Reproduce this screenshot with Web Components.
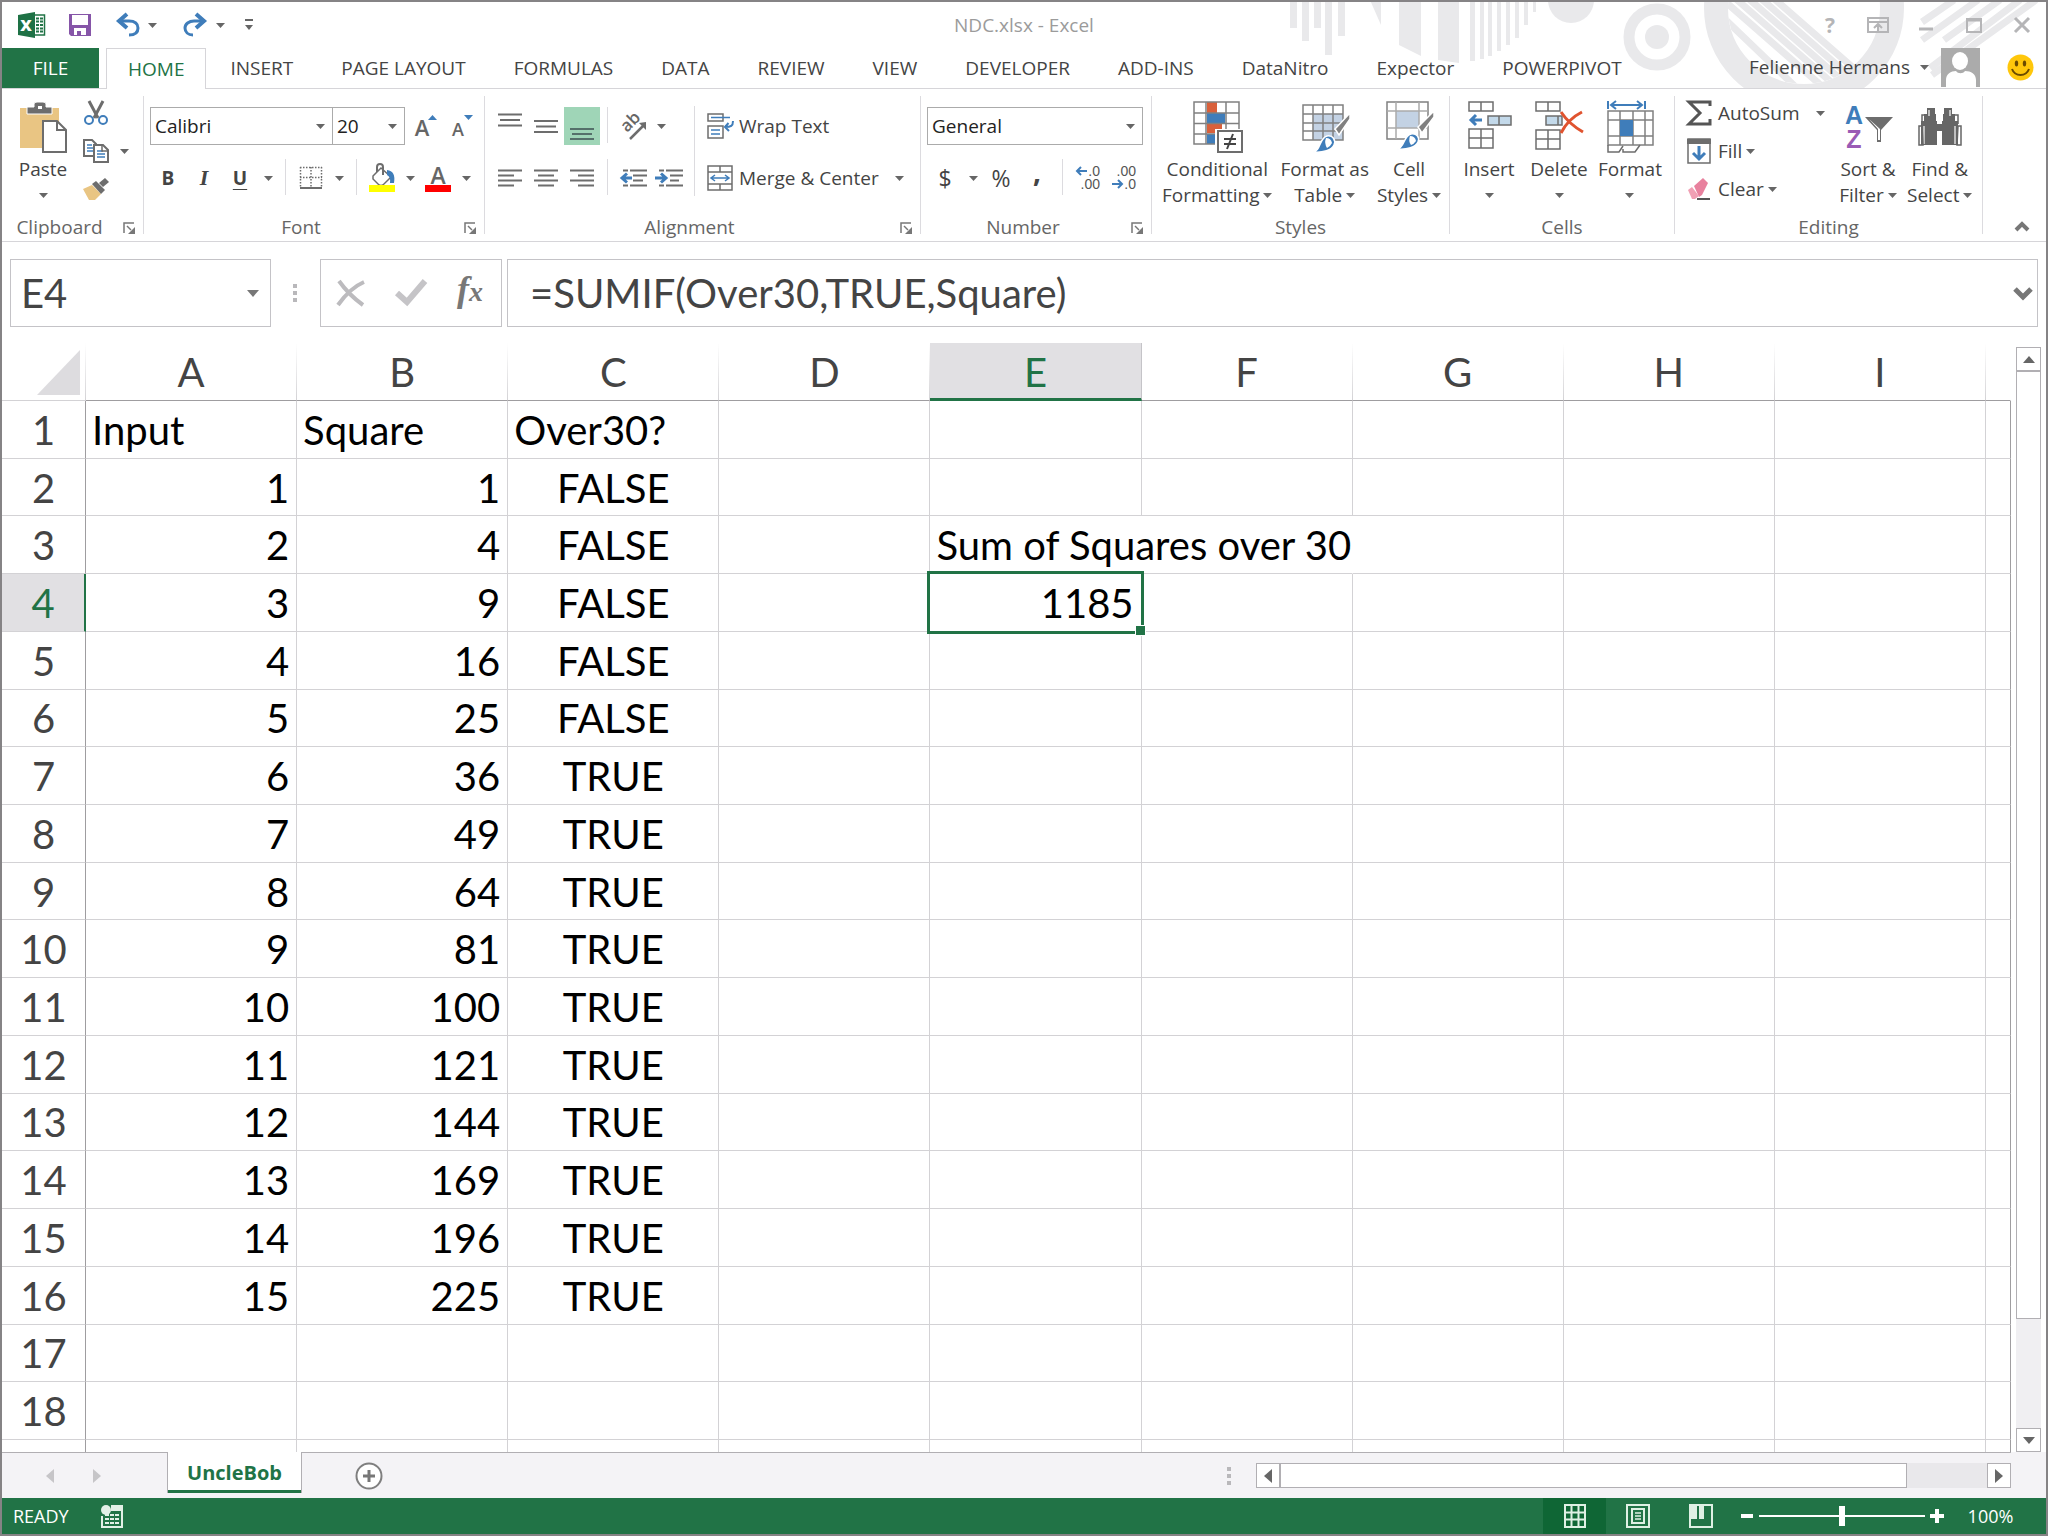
<!DOCTYPE html>
<html lang="en">
<head>
<meta charset="utf-8">
<meta name="viewport" content="width=device-width, initial-scale=1">
<title>NDC.xlsx - Excel</title>
<style>
    :root{
        --green: #217346;
        --text: #444;
        --gray: #737373;
        --line: #d6d5d9;
        --line-dark: #aaa8ac;
        --blue: #3f7dba;
        --font-ui: "Open Sans", "Noto Sans", sans-serif;
        --font-cell: Lato, "Liberation Sans", sans-serif;
        --size-ui: 19px;
        --size-cell: 40px;
    }
    body{
        margin: 0;
    }
</style>
</head>
<body>
<excel-window></excel-window>

<script>
// name: [width, height, markup]
const icons = {
    caret: [9, 5, `<path d="M0 0h9L4.500 5z" fill="#666"/>`],
    excel: [28, 26, `<path d="M14 3h12.500v20H14z" fill="#fff" stroke="#217346" stroke-width="1.500"/><path d="M18 6.500h7M18 9.500h7M18 13h7M18 16.500h7M18 19.500h7" stroke="#217346" stroke-width="2" stroke-dasharray="3 1"/><path d="M0 3L17 0v26L0 23z" fill="#1e7145"/><text x="8" y="19" text-anchor="middle" font-family="Open Sans" font-weight="800" font-size="16" fill="#fff">X</text>`],
    save: [24, 24, `<path d="M1 1h22v22H3l-2-2z" fill="#8655a8"/><path d="M4 2h16v10H4zM6 15h12v7H6z" fill="#fff"/><path d="M9 18h4v4H9z" fill="#8655a8"/>`],
    undo: [26, 24, `<path d="M3 8h11c6 0 9 3 9 7 0 5-4 7-9 7" fill="none" stroke="#3f7dba" stroke-width="3"/><path d="M12 1L4 8l8 7" fill="none" stroke="#3f7dba" stroke-width="4"/>`],
    redo: [26, 24, `<path d="M22 8H11c-5 0-9 3-9 7 0 4 3 7 8 7" fill="none" stroke="#3f7dba" stroke-width="3"/><path d="M13 1l8 7-8 7" fill="none" stroke="#3f7dba" stroke-width="4"/>`],
    customize: [10, 12, `<path d="M1 1h8" stroke="#666" stroke-width="2"/><path d="M1 6h8l-4 5z" fill="#666"/>`],
    help: [14, 30, `<text x="7" y="23" text-anchor="middle" font-family="Open Sans" font-weight="700" font-size="21" fill="#b5b5b7">?</text>`],
    ribbonOptions: [22, 16, `<path d="M1 1h20v14H1zM1 5h20M11 14V8M7 11l4-4 4 4" fill="none" stroke="#b5b5b7" stroke-width="2"/>`],
    minimize: [16, 16, `<path d="M1 12h14" stroke="#b5b5b7" stroke-width="3"/>`],
    maximize: [18, 16, `<path d="M2 2h14v13H2z" fill="none" stroke="#b5b5b7" stroke-width="2"/><path d="M1 3h16" stroke="#b5b5b7" stroke-width="3"/>`],
    close: [16, 16, `<path d="M1 1l14 14M15 1L1 15" stroke="#b5b5b7" stroke-width="3"/>`],
    avatar: [39, 39, `<path d="M0 0h39v39H0z" fill="#ababab"/><path d="M5 39V32c0-6 5-9 10-9 2 3 7 3 9 0 6 0 11 3 11 9v7z" fill="#fff"/><ellipse cx="19" cy="13" rx="8" ry="9" fill="#fff"/>`],
    smiley: [27, 27, `<circle cx="13.500" cy="13.500" r="13" fill="#ffc70b"/><ellipse cx="9.500" cy="9.500" rx="1.700" ry="3" fill="#6b4b00"/><ellipse cx="17.500" cy="9.500" rx="1.700" ry="3" fill="#6b4b00"/><path d="M5 15c3 8 14 8 17 0" fill="none" stroke="#6b4b00" stroke-width="2"/>`],
    paste: [48, 52, `<path d="M1 7h39v40H1z" fill="#e9c583"/><path d="M8 13V6h7V3q0-2 3-2h6q3 0 3 2v3h6v7z" fill="#6d6d6d" stroke="#fff" stroke-width="1"/><path d="M19 5h4v3h-4z" fill="#fff"/><path d="M24 20h14l9 9v22H24z" fill="#fff" stroke="#6d6d6d" stroke-width="2"/><path d="M38 20v9h9" fill="none" stroke="#6d6d6d" stroke-width="2"/>`],
    cut: [24, 26, `<path d="M5 1l9 17M19 1l-9 17" stroke="#6d6d6d" stroke-width="3"/><circle cx="5" cy="20" r="4" fill="none" stroke="#3f7dba" stroke-width="2"/><circle cx="19" cy="20" r="4" fill="none" stroke="#3f7dba" stroke-width="2"/>`],
    copy: [26, 24, `<path d="M1 1h8l4 4v12H1z" fill="#fff" stroke="#6d6d6d" stroke-width="2"/><path d="M4 6h5M4 9h7M4 12h7" stroke="#3f7dba" stroke-width="1.500"/><path d="M11 6h9l5 5v12H11z" fill="#fff" stroke="#6d6d6d" stroke-width="2"/><path d="M14 12h6M14 15h8M14 18h8" stroke="#3f7dba" stroke-width="1.500"/><path d="M19 6v6h6" fill="none" stroke="#6d6d6d" stroke-width="1.500"/>`],
    painter: [26, 24, `<path d="M0 12l9-4 9 9-6 6H6z" fill="#e9c583"/><path d="M9 7l4-3 9 9-4 4z" fill="#6d6d6d"/><path d="M16 6l6-5 4 4-6 5z" fill="#6d6d6d"/>`],
    grow: [26, 34, `<text x="9" y="27" text-anchor="middle" font-family="Open Sans" font-weight="600" font-size="22" fill="#666">A</text><path d="M15 11h9l-4.500-5z" fill="#3f7dba"/>`],
    shrink: [24, 34, `<text x="8" y="27" text-anchor="middle" font-family="Open Sans" font-weight="600" font-size="18" fill="#666">A</text><path d="M14 6h9l-4.500 5z" fill="#3f7dba"/>`],
    border: [24, 24, `<path d="M1.500 1v20M12 1v20M22.500 1v20M1 1.500h22M1 11.500h22" stroke="#6d6d6d" stroke-width="1.500" stroke-dasharray="1.500 1.500"/><path d="M1 22h22" stroke="#6d6d6d" stroke-width="2"/>`],
    fillColor: [28, 30, `<path d="M5 13l8-8 10 9-8 8q-2 1-4 0l-6-6z" fill="#fff" stroke="#6d6d6d" stroke-width="1.500"/><path d="M9 9V4q0-3 3-3t3 3v8" fill="none" stroke="#6d6d6d" stroke-width="2"/><path d="M19 7q9 1 7 13h-4q1-6-3-8z" fill="#3f7dba"/><path d="M1 22h26v7H1z" fill="#ff0"/>`],
    fontColor: [28, 30, `<text x="14" y="21" text-anchor="middle" font-family="Open Sans" font-weight="600" font-size="23" fill="#666">A</text><path d="M1 22h26v7H1z" fill="#f00"/>`],
    launcher: [14, 14, `<path d="M2 12V2h10" fill="none" stroke="#777" stroke-width="1.500"/><path d="M5 5l4 4" stroke="#777" stroke-width="1.500"/><path d="M13 6v7H6z" fill="#777"/>`],
    alignTop: [24, 36, `<path d="M0 6.500h24M2 12h20M0 17.500h24" stroke="#6d6d6d" stroke-width="2"/>`],
    alignMiddle: [24, 36, `<path d="M0 13h24M2 18.500h20M0 24h24" stroke="#6d6d6d" stroke-width="2"/>`],
    alignBottom: [24, 36, `<path d="M0 21h24M2 26h20M0 31h24" stroke="#55706a" stroke-width="2"/>`],
    alignLeft: [24, 18, `<path d="M0 1.500h24M0 6.500h16M0 11.500h24M0 16.500h16" stroke="#6d6d6d" stroke-width="2"/>`],
    alignCenter: [24, 18, `<path d="M0 1.500h24M4 6.500h16M0 11.500h24M4 16.500h16" stroke="#6d6d6d" stroke-width="2"/>`],
    alignRight: [24, 18, `<path d="M0 1.500h24M8 6.500h16M0 11.500h24M8 16.500h16" stroke="#6d6d6d" stroke-width="2"/>`],
    orientation: [30, 30, `<text x="0" y="0" transform="translate(9 22) rotate(-45)" font-family="Open Sans" font-weight="600" font-size="17" fill="#666">ab</text><path d="M12 28l14-14" stroke="#6d6d6d" stroke-width="2.500"/><path d="M28 11v8l-7-7z" fill="#6d6d6d"/>`],
    outdent: [28, 18, `<path d="M4 1.500h5M11 1.500h17M14 6.500h14M14 11.500h10M4 16.500h5M11 16.500h17" stroke="#6d6d6d" stroke-width="2"/><path d="M13 9H4M8 4.500L3 9l5 4.500" fill="none" stroke="#3f7dba" stroke-width="3"/>`],
    indent: [28, 18, `<path d="M4 1.500h5M11 1.500h17M15 6.500h13M15 11.500h9M4 16.500h5M11 16.500h17" stroke="#6d6d6d" stroke-width="2"/><path d="M0 9h10M6 4.500L11 9l-5 4.500" fill="none" stroke="#3f7dba" stroke-width="3"/>`],
    wrap: [28, 26, `<path d="M1 1h15v7H1zM1 13h15v12H1z" fill="#fff" stroke="#6d6d6d" stroke-width="1.500"/><path d="M4 4.500h19M4 17h9M4 21h9" stroke="#3f7dba" stroke-width="1.500"/><path d="M26 8c0 5-2 6-8 6M21.500 10L18 14l4 4" fill="none" stroke="#3f7dba" stroke-width="2"/>`],
    merge: [26, 26, `<path d="M1 1h24v24H1zM1 7h24M1 19h24M13 1v6M13 19v6" fill="none" stroke="#6d6d6d" stroke-width="1.500"/><path d="M5 13h16M8 10l-4 3 4 3M18 10l4 3-4 3" fill="none" stroke="#3f7dba" stroke-width="1.500"/>`],
    moreDecimals: [26, 32, `<g font-family="Liberation Sans" font-size="14" fill="#555"><text x="25" y="14" text-anchor="end">.0</text><text x="25" y="27" text-anchor="end">.00</text></g><path d="M2 9h10M6 5L2 9l4 4" fill="none" stroke="#3f7dba" stroke-width="2"/>`],
    lessDecimals: [26, 32, `<g font-family="Liberation Sans" font-size="14" fill="#555"><text x="25" y="14" text-anchor="end">.00</text><text x="25" y="27" text-anchor="end">.0</text></g><path d="M1 22h10M7 18l4 4-4 4" fill="none" stroke="#3f7dba" stroke-width="2"/>`],
    conditional: [52, 52, `<path d="M3 1h45v42H3z" fill="#fff"/><path d="M16 1h10v11H16zM16 23h15v9H16z" fill="#d9603b"/><path d="M16 12h18v10H16zM16 33h8v10h-8z" fill="#3f7dba"/><path d="M3 1h45v42H3zM15 1v42M35 1v42M3 12h45M3 22.500h45M3 33h45" fill="none" stroke="#808080" stroke-width="1.500"/><path d="M24 28h28v24H24z" fill="#fff"/><path d="M27 30h24v21H27z" fill="#fff" stroke="#6d6d6d" stroke-width="2"/><path d="M33 38h12M33 43h12M42 33l-6 15" stroke="#444" stroke-width="2"/>`],
    formatTable: [52, 52, `<path d="M4 4h40v35H4z" fill="#fff"/><path d="M14 13h30v26H14z" fill="#c3d2e4"/><path d="M4 4h40v35H4zM14 4v35M24 4v35M34 4v35M4 13h40M4 22h40M4 30h40" fill="none" stroke="#808080" stroke-width="1.500"/><path d="M51 12L36 28l4 6 11-16z" fill="#808080" stroke="#fff" stroke-width="1.500"/><path d="M14 51c8-1 6-14 14-16 6-1 9 4 7 9-2 5-11 8-21 7z" fill="#3f7dba" stroke="#fff" stroke-width="1.500"/><path d="M27 37q5 0 6 5-2 4-5 5-3-5-1-10z" fill="#fff"/>`],
    cellStyles: [52, 52, `<path d="M4 1h41v37H4z" fill="#fff" stroke="#808080" stroke-width="1.500"/><path d="M13 10h23v17H13z" fill="#c3d2e4"/><path d="M13 1v37M36 1v37M4 10h41M4 27h41" fill="none" stroke="#aaa" stroke-width="1.500"/><path d="M51 10L35 26l4 6 12-16z" fill="#808080" stroke="#fff" stroke-width="1.500"/><path d="M14 48c8-1 6-13 14-15 6-1 9 4 7 8-2 5-11 8-21 7z" fill="#3f7dba" stroke="#fff" stroke-width="1.500"/><path d="M27 35q5 0 6 5-2 3-5 4-3-4-1-9z" fill="#fff"/>`],
    insertCells: [48, 52, `<path d="M4 1h24v9H4zM16 1v9M4 28h24v19H4zM16 28v19M4 37h24" fill="#fff" stroke="#6d6d6d" stroke-width="1.500"/><path d="M23 15h23v9H23zM34 15v9" fill="#c3d9ea" stroke="#6d6d6d" stroke-width="1.500"/><path d="M17 19H7M11 14l-5 5 5 5" fill="none" stroke="#3f7dba" stroke-width="3"/>`],
    deleteCells: [50, 52, `<path d="M2 1h24v9H2zM14 1v9M2 29h24v19H2zM14 29v19M2 38h24" fill="#fff" stroke="#6d6d6d" stroke-width="1.500"/><path d="M12 15h16v9H12zM24 15v9" fill="#c3d9ea" stroke="#6d6d6d" stroke-width="1.500"/><path d="M27 11q8 12 22 20M48 11Q34 18 27 32" fill="none" stroke="#e0532f" stroke-width="3"/>`],
    formatCells: [50, 52, `<path d="M3 0v8M40 0v8M7 4h29M11 0L6 4l5 4M32 0l5 4-5 4" fill="none" stroke="#3f7dba" stroke-width="2"/><path d="M3 10h45v34H3zM15 10v34M28 10v34M40 10v34M3 19h45M3 35h45" fill="#fff" stroke="#808080" stroke-width="1.500"/><path d="M15 19h13v16H15z" fill="#3f7dba"/><path d="M3 44v7h11l4-6M18 48v3h12l5-7" fill="none" stroke="#6d6d6d" stroke-width="1.500"/>`],
    sum: [26, 26, `<path d="M24 6V2H3l11 11L3 24h21v-5" fill="none" stroke="#555" stroke-width="3"/>`],
    fill: [26, 26, `<path d="M2 1h22v24H2z" fill="#fff" stroke="#6d6d6d" stroke-width="1.500"/><path d="M1 1h24v5H1z" fill="#6d6d6d"/><path d="M13 8v12M7 15l6 6 6-6" fill="none" stroke="#3f7dba" stroke-width="3"/>`],
    clear: [26, 24, `<path d="M8 9l9-8 5 5-6 12-3 2z" fill="#e8819e"/><path d="M2 13l4-3 7 9-4 3H6z" fill="#f0a0b4"/><path d="M11 22h13" stroke="#555" stroke-width="2"/>`],
    sort: [50, 52, `<text x="11" y="23" text-anchor="middle" font-family="Liberation Sans" font-weight="700" font-size="25" fill="#3f7dba">A</text><text x="11" y="47" text-anchor="middle" font-family="Liberation Sans" font-weight="700" font-size="25" fill="#9a5bb5">Z</text><path d="M22 16h28L38 29v12h-4V29z" fill="#6d6d6d"/><path d="M26 18l9 10v11h2V28z" fill="#fff"/>`],
    find: [46, 42, `<path d="M10 2h8v8H10zM27 2h8v8h-8zM7 8h12v10H7zM26 8h12v10H26zM4 15h16v24H4zM25 15h16v24H25z" fill="#666"/><path d="M18 18h10v7H18z" fill="#666"/><path d="M7 20v18M12 4v6M33 4v6M38 20v18" stroke="#ddd" stroke-width="1.500"/><path d="M5 20H2v19h4zM41 20h3v19h-4zM8 9H5v9M38 9h3v9" fill="none" stroke="#666" stroke-width="1.500"/>`],
    collapse: [16, 12, `<path d="M2 10l6-6 6 6" fill="none" stroke="#777" stroke-width="4"/>`],
    expand: [20, 14, `<path d="M2 3l8 8 8-8" fill="none" stroke="#777" stroke-width="5"/>`],
    cancel: [30, 30, `<path d="M3 3q10 14 24 24M28 4Q14 10 2 27" fill="none" stroke="#bcbbbe" stroke-width="4"/>`],
    enter: [32, 30, `<path d="M2 15l10 9L30 3" fill="none" stroke="#c5c4c7" stroke-width="6"/>`],
    function: [34, 46, `<text x="16" y="31" text-anchor="middle" font-family="Liberation Serif" font-style="italic" font-weight="700" font-size="36" fill="#777">f<tspan font-size="28">x</tspan></text>`],
    dots: [4, 18, `<path d="M0 0h4v4H0zM0 7h4v4H0zM0 14h4v4H0z" fill="#b9b8bb"/>`],
    left: [8, 14, `<path d="M8 0v14L0 7z" fill="currentColor"/>`],
    right: [8, 14, `<path d="M0 0v14l8-7z" fill="currentColor"/>`],
    up: [12, 7, `<path d="M0 7h12L6 0z" fill="currentColor"/>`],
    down: [12, 7, `<path d="M0 0h12L6 7z" fill="currentColor"/>`],
    add: [28, 28, `<circle cx="14" cy="14" r="12.500" fill="#fff" stroke="#7f7f7f" stroke-width="2"/><path d="M14 8v12M8 14h12" stroke="#777" stroke-width="3"/>`],
    macro: [24, 24, `<circle cx="6" cy="6" r="5" fill="#e2f0e6"/><path d="M2 12v11h20V2H12v4h10M12 4h10" fill="none" stroke="#e2f0e6" stroke-width="2"/><path d="M5 11h14M5 15h14M5 19h14" stroke="#e2f0e6" stroke-width="2" stroke-dasharray="4 1"/>`],
    viewNormal: [24, 24, `<path d="M2 1h20v22H2zM8.500 1v22M15.500 1v22M2 8.500h20M2 15.500h20" fill="none" stroke="#dff0e4" stroke-width="2"/>`],
    viewPage: [24, 24, `<path d="M1 1h22v22H1zM6 5h12v14H6z" fill="none" stroke="#dff0e4" stroke-width="2"/><path d="M9 9h6M9 12h6M9 15h6" stroke="#dff0e4" stroke-width="1.500"/>`],
    viewBreak: [24, 24, `<path d="M1 1h22v22H1z" fill="none" stroke="#dff0e4" stroke-width="2"/><path d="M2 2h6v13H2zM10 2h5v13h-5z" fill="#dff0e4"/>`]
};

class ExcelElement extends HTMLElement{
    constructor(){
        super();
        this.attachShadow({mode: "open"});
    }
    connectedCallback(){
        const template = document.createElement("template");
        template.innerHTML = `<style>
        *{
            box-sizing: border-box;
        }
        button, input, select{
            margin: 0;
            padding: 0;
            border: 0;
            border-radius: 0;
            background: none;
            font: inherit;
            color: inherit;
            appearance: none;
        }
        button{
            display: flex;
            align-items: center;
            justify-content: center;
        }
        ${this.getStyles()}
        </style>${this.getTemplate()}`;
        this.shadowRoot.appendChild(template.content.cloneNode(true));
    }
}

class XlIcon extends ExcelElement{
    getTemplate(){
        const [width, height, markup] = icons[this.getAttribute("name")];
        return `<svg width="${width}" height="${height}" viewBox="0 0 ${width} ${height}" aria-hidden="true">${markup}</svg>`;
    }
    getStyles(){
        return `
        :host{ display: inline-flex; flex: none; }
        svg{ display: block; overflow: visible; }
        `;
    }
}

class XlTool extends ExcelElement{
    getTemplate(){
        const icon = this.getAttribute("icon");
        return `<button type="button" aria-label="${this.getAttribute("label")}">${icon ? `<xl-icon name="${icon}"></xl-icon>` : ""}<slot></slot></button>`;
    }
    getStyles(){
        return `
        :host{ display: block; flex: none; }
        button{ width: 36px; height: 38px; }
        :host([icon="caret"]) button{ width: 20px; }
        :host([active]) button{ background: #9fd5b7; }
        `;
    }
}

// icon with its text at the side
class XlTextTool extends ExcelElement{
    getTemplate(){
        return `<button type="button">
            <span class="icon"><xl-icon name="${this.getAttribute("icon")}"></xl-icon></span>
            <slot></slot>
            ${this.hasAttribute("menu") ? `<xl-icon class="caret" name="caret"></xl-icon>` : ""}
        </button>`;
    }
    getStyles(){
        return `
        :host{ display: block; flex: none; }
        button{ height: 38px; white-space: nowrap; }
        .icon{ display: flex; width: 28px; margin-right: 4px; }
        .caret{ margin-left: 4px; }
        :host([menu="wide"]) .caret{ margin-left: 16px; }
        `;
    }
}

// large icon above one or two lines of text
class XlBigTool extends ExcelElement{
    getTemplate(){
        return `<button type="button">
            <span class="icon"><xl-icon name="${this.getAttribute("icon")}"></xl-icon></span>
            <span class="line"><slot></slot></span>
            <span class="line"><slot name="second"></slot><xl-icon name="caret"></xl-icon></span>
        </button>`;
    }
    getStyles(){
        return `
        :host{ display: block; flex: none; }
        button{ flex-direction: column; min-width: 70px; padding: 0 4px; }
        .icon{ display: flex; align-items: center; justify-content: center; height: 52px; }
        .line{ display: flex; align-items: center; gap: 4px; height: 26px; white-space: nowrap; }
        .icon + .line{ margin-top: 3px; }
        `;
    }
}

class XlCombo extends ExcelElement{
    getTemplate(){
        return `<select aria-label="${this.getAttribute("label")}"><option>${this.getAttribute("value")}</option></select><xl-icon name="caret"></xl-icon>`;
    }
    getStyles(){
        return `
        :host{ display: grid; align-items: center; height: 38px; border: 1px solid #ababab; box-sizing: border-box; color: #222; }
        select{ grid-area: 1 / 1; width: 100%; height: 36px; padding-left: 4px; }
        xl-icon{ grid-area: 1 / 1; justify-self: end; margin-right: 7px; pointer-events: none; }
        `;
    }
}

class XlGroup extends ExcelElement{
    getTemplate(){
        return `
        <div class="body"><slot></slot></div>
        <footer>
            <span>${this.getAttribute("label")}</span>
            ${this.hasAttribute("launcher") ? `<button type="button" aria-label="${this.getAttribute("label")} settings"><xl-icon name="launcher"></xl-icon></button>` : ""}
        </footer>`;
    }
    getStyles(){
        return `
        :host{ display: flex; flex-direction: column; flex: none; box-sizing: border-box; border-right: 1px solid #dcdbdf; }
        .body{ flex: 1; min-height: 0; display: flex; }
        footer{ display: flex; align-items: center; height: 14px; color: #666; }
        span{ flex: 1; text-align: center; line-height: 26px; }
        button{ width: 26px; height: 14px; padding-top: 2px; padding-right: 2px; }
        `;
    }
}

class ExcelHeader extends ExcelElement{
    getTemplate(){
        const tabs = ["INSERT", "PAGE LAYOUT", "FORMULAS", "DATA", "REVIEW", "VIEW", "DEVELOPER", "ADD-INS", "DataNitro", "Expector", "POWERPIVOT"];
        return `
        <svg class="art" width="768" height="86" viewBox="1278 2 768 86" aria-hidden="true">
            <defs><clipPath id="disc"><circle cx="1804" cy="8" r="76"/></clipPath></defs>
            <g fill="#e9e9eb">
                <path d="M1290 0h7v28h-7zM1302 0h7v41h-7zM1314 0h7v28h-7zM1325 0h7v55h-7zM1338 0h7v36h-7z"/>
                <path d="M1370 0h11v25zM1399 0h22v56l-22-11zM1438 0h21v63l-21-3z"/>
                <path d="M1470 0h5v61h-5zM1480 0h4v59h-4zM1488 0h4v56h-4zM1497 0h4v51h-4zM1506 0h4v45h-4zM1515 0h4v38h-4zM1524 0h4v25h-4zM1533 0h3v12h-3z"/>
                <circle cx="1571" cy="0" r="23"/>
                <circle cx="1657" cy="37" r="12"/>
            </g>
            <g fill="none" stroke="#e9e9eb">
                <circle cx="1657" cy="37" r="28" stroke-width="11"/>
                <circle cx="1804" cy="8" r="88" stroke-width="24"/>
                <path clip-path="url(#disc)" stroke-width="7" d="M1757 -5l120 105M1741 -8l120 105M1727 -9l120 105M1712 -10l120 105M1770 -5l120 105M1705 0l100 96"/>
                <path stroke-width="7" d="M1954 0l-32 22M1978 0l-56 40M2000 0l-56 40M2020 0l-90 68M2036 0l-104 75"/>
            </g>
        </svg>
        <div class="title">
            <div class="quick">
                <xl-icon name="excel"></xl-icon>
                <button type="button" class="quick__button" aria-label="Save"><xl-icon name="save"></xl-icon></button>
                <div class="quick__pair">
                    <button type="button" class="quick__button" aria-label="Undo"><xl-icon name="undo"></xl-icon></button>
                    <button type="button" class="quick__menu" aria-label="Undo list"><xl-icon name="caret"></xl-icon></button>
                </div>
                <div class="quick__pair">
                    <button type="button" class="quick__button" aria-label="Redo"><xl-icon name="redo"></xl-icon></button>
                    <button type="button" class="quick__menu" aria-label="Redo list"><xl-icon name="caret"></xl-icon></button>
                    <button type="button" class="quick__menu quick__menu--wide" aria-label="Customize toolbar"><xl-icon name="customize"></xl-icon></button>
                </div>
            </div>
            <span class="title__text">NDC.xlsx - Excel</span>
            <div class="controls">
                ${["help", "ribbonOptions", "minimize", "maximize", "close"].map(name => `<button type="button" aria-label="${name}"><xl-icon name="${name}"></xl-icon></button>`).join("")}
            </div>
        </div>
        <nav>
            <button type="button" class="file">FILE</button>
            <button type="button" class="tab tab--active">HOME</button>
            ${tabs.map(tab => `<button type="button" class="tab">${tab}</button>`).join("")}
            <div class="account">
                <button type="button" class="account__name">Felienne Hermans <xl-icon name="caret"></xl-icon></button>
                <xl-icon name="avatar"></xl-icon>
                <button type="button" class="account__smile" aria-label="Feedback"><xl-icon name="smiley"></xl-icon></button>
            </div>
        </nav>`;
    }
    getStyles(){
        return `
        :host{ display: block; position: relative; }
        .art{ position: absolute; top: 0; right: 0; }
        .title{ position: relative; display: grid; grid-template-columns: 1fr auto 1fr; align-items: center; height: 46px; }
        .title__text{ color: #9b9b9b; }
        .quick{ display: flex; align-items: center; gap: 20px; padding-left: 16px; }
        .quick__pair{ display: flex; align-items: center; }
        .quick__button{ width: 28px; height: 28px; }
        .quick__menu{ width: 20px; height: 28px; }
        .quick__menu--wide{ width: 38px; }
        .controls{ display: flex; justify-content: flex-end; }
        .controls button{ width: 48px; height: 32px; }
        nav{ position: relative; display: flex; height: 41px; border-bottom: 1px solid var(--line); }
        .file{ width: 97px; height: 40px; margin-right: 7px; background: var(--green); color: #fff; }
        .tab{ flex: none; height: 40px; padding: 0 24px; }
        .tab--active{ height: 41px; padding: 0 21px; color: var(--green); background: #fff; border: 1px solid var(--line); border-bottom: 0; }
        .account{ display: flex; align-items: flex-start; margin-left: auto; padding-right: 12px; }
        .account__name{ height: 38px; gap: 10px; margin-right: 12px; white-space: nowrap; }
        .account__smile{ margin-left: 27px; padding-top: 6px; }
        `;
    }
}

class ExcelRibbon extends ExcelElement{
    getTemplate(){
        return `
        <xl-group label="Clipboard" launcher class="clipboard">
            <xl-big-tool icon="paste">Paste</xl-big-tool>
            <div class="stack">
                <xl-tool icon="cut" label="Cut"></xl-tool>
                <div class="row"><xl-tool icon="copy" label="Copy"></xl-tool><xl-tool icon="caret" label="Copy options"></xl-tool></div>
                <xl-tool icon="painter" label="Format Painter"></xl-tool>
            </div>
        </xl-group>
        <xl-group label="Font" launcher class="font">
            <div class="rows">
                <div class="row">
                    <xl-combo class="font__name" label="Font" value="Calibri"></xl-combo>
                    <xl-combo class="font__size" label="Font size" value="20"></xl-combo>
                    <xl-tool icon="grow" label="Increase font size"></xl-tool>
                    <xl-tool icon="shrink" label="Decrease font size"></xl-tool>
                </div>
                <div class="row">
                    <xl-tool label="Bold"><b>B</b></xl-tool>
                    <xl-tool label="Italic"><b class="italic">I</b></xl-tool>
                    <xl-tool label="Underline"><b class="underline">U</b></xl-tool>
                    <xl-tool icon="caret" label="Underline options"></xl-tool>
                    <i class="rule"></i>
                    <xl-tool icon="border" label="Borders"></xl-tool>
                    <xl-tool icon="caret" label="Border options"></xl-tool>
                    <i class="rule"></i>
                    <xl-tool icon="fillColor" label="Fill color"></xl-tool>
                    <xl-tool icon="caret" label="Fill colors"></xl-tool>
                    <xl-tool icon="fontColor" label="Font color"></xl-tool>
                    <xl-tool icon="caret" label="Font colors"></xl-tool>
                </div>
            </div>
        </xl-group>
        <xl-group label="Alignment" launcher class="alignment">
            <div class="rows">
                <div class="row">
                    <xl-tool icon="alignTop" label="Top align"></xl-tool>
                    <xl-tool icon="alignMiddle" label="Middle align"></xl-tool>
                    <xl-tool icon="alignBottom" label="Bottom align" active></xl-tool>
                    <i class="rule"></i>
                    <xl-tool icon="orientation" label="Orientation"></xl-tool>
                    <xl-tool icon="caret" label="Orientation options"></xl-tool>
                </div>
                <div class="row">
                    <xl-tool icon="alignLeft" label="Align left"></xl-tool>
                    <xl-tool icon="alignCenter" label="Center"></xl-tool>
                    <xl-tool icon="alignRight" label="Align right"></xl-tool>
                    <i class="rule"></i>
                    <xl-tool icon="outdent" label="Decrease indent"></xl-tool>
                    <xl-tool icon="indent" label="Increase indent"></xl-tool>
                </div>
            </div>
            <i class="rule rule--tall"></i>
            <div class="rows rows--text">
                <xl-text-tool icon="wrap">Wrap Text</xl-text-tool>
                <xl-text-tool icon="merge" menu="wide">Merge &amp; Center</xl-text-tool>
            </div>
        </xl-group>
        <xl-group label="Number" launcher class="number">
            <div class="rows">
                <xl-combo class="number__format" label="Number format" value="General"></xl-combo>
                <div class="row">
                    <xl-tool label="Accounting format"><span class="sign">$</span></xl-tool>
                    <xl-tool icon="caret" label="Currencies"></xl-tool>
                    <xl-tool label="Percent"><span class="sign">%</span></xl-tool>
                    <xl-tool label="Comma style"><b class="comma">,</b></xl-tool>
                    <i class="rule"></i>
                    <xl-tool icon="moreDecimals" label="Increase decimal"></xl-tool>
                    <xl-tool icon="lessDecimals" label="Decrease decimal"></xl-tool>
                </div>
            </div>
        </xl-group>
        <xl-group label="Styles" class="styles">
            <xl-big-tool icon="conditional">Conditional<span slot="second">Formatting</span></xl-big-tool>
            <xl-big-tool icon="formatTable">Format as<span slot="second">Table</span></xl-big-tool>
            <xl-big-tool icon="cellStyles">Cell<span slot="second">Styles</span></xl-big-tool>
        </xl-group>
        <xl-group label="Cells" class="cells">
            <xl-big-tool icon="insertCells">Insert</xl-big-tool>
            <xl-big-tool icon="deleteCells">Delete</xl-big-tool>
            <xl-big-tool icon="formatCells">Format</xl-big-tool>
        </xl-group>
        <xl-group label="Editing" class="editing">
            <div class="stack stack--text">
                <xl-text-tool icon="sum" menu="wide">AutoSum</xl-text-tool>
                <xl-text-tool icon="fill" menu>Fill</xl-text-tool>
                <xl-text-tool icon="clear" menu>Clear</xl-text-tool>
            </div>
            <xl-big-tool icon="sort">Sort &amp;<span slot="second">Filter</span></xl-big-tool>
            <xl-big-tool icon="find">Find &amp;<span slot="second">Select</span></xl-big-tool>
        </xl-group>
        <button type="button" class="collapse" aria-label="Collapse the ribbon"><xl-icon name="collapse"></xl-icon></button>`;
    }
    getStyles(){
        return `
        :host{ display: flex; height: 153px; padding: 7px 0; box-sizing: border-box; border-bottom: 1px solid var(--line); }
        xl-big-tool{ margin-top: 5px; }
        .row{ display: flex; }
        .rows{ display: flex; flex-direction: column; gap: 14px; padding: 11px 0 0 6px; }
        .rows--text{ padding-left: 12px; }
        .stack{ display: flex; flex-direction: column; margin-top: -2px; }
        .stack--text{ width: 158px; padding-left: 11px; align-items: flex-start; }
        .rule{ width: 1px; height: 36px; margin: 0 7px; background: #dcdbdf; }
        .rule--tall{ height: 90px; margin: 10px 0 0 7px; }
        .clipboard{ width: 142px; }
        .clipboard xl-big-tool{ margin-left: 6px; }
        .font{ width: 341px; }
        .font__name{ width: 183px; margin-right: -1px; }
        .font__size{ width: 73px; margin-right: 3px; }
        .alignment{ width: 436px; }
        .alignment .rows:first-child{ padding-left: 7px; }
        .number{ width: 231px; }
        .number__format{ width: 216px; }
        .styles{ width: 298px; }
        .styles xl-big-tool:first-child{ margin-left: 6px; }
        .cells{ width: 225px; }
        .cells xl-big-tool:first-child{ margin-left: 4px; }
        .editing{ width: 308px; }
        .italic{ font-family: "Liberation Serif", serif; font-size: 22px; font-style: italic; }
        .underline{ text-decoration: underline; text-underline-offset: 4px; }
        .sign{ font-size: 23px; }
        .comma{ font-size: 28px; line-height: 20px; margin-top: -14px; }
        .collapse{ align-self: flex-end; margin-left: auto; padding-right: 16px; height: 16px; }
        `;
    }
}

class FormulaBar extends ExcelElement{
    getTemplate(){
        return `
        <div class="name">
            <input type="text" value="E4" aria-label="Name box">
            <button type="button" aria-label="Names"><xl-icon name="down"></xl-icon></button>
        </div>
        <xl-icon name="dots"></xl-icon>
        <div class="buttons">
            <button type="button" aria-label="Cancel"><xl-icon name="cancel"></xl-icon></button>
            <button type="button" aria-label="Enter"><xl-icon name="enter"></xl-icon></button>
            <button type="button" aria-label="Insert function"><xl-icon name="function"></xl-icon></button>
        </div>
        <div class="formula">
            <input type="text" value="=SUMIF(Over30,TRUE,Square)" aria-label="Formula">
            <button type="button" aria-label="Expand formula bar"><xl-icon name="expand"></xl-icon></button>
        </div>`;
    }
    getStyles(){
        return `
        :host{ display: flex; align-items: center; padding: 17px 8px 16px; font-family: var(--font-cell); font-size: var(--size-cell); }
        .name, .buttons, .formula{ display: flex; height: 68px; border: 1px solid #c4c3c7; }
        input{ flex: 1; min-width: 0; }
        .name{ width: 261px; padding-left: 10px; margin-right: 22px; }
        .name button{ width: 34px; color: #777; }
        .buttons{ width: 182px; margin: 0 5px 0 23px; }
        .buttons button{ flex: 1; }
        .formula{ flex: 1; padding-left: 22px; }
        .formula button{ width: 28px; }
        `;
    }
}

class SheetGrid extends ExcelElement{
    getTemplate(){
        const columns = ["A", "B", "C", "D", "E", "F", "G", "H", "I"];
        const cells = {A1: "Input", B1: "Square", C1: "Over30?", E3: "Sum of Squares over 30", E4: 1185};
        for(let i = 1; i <= 15; i++){
            cells["A" + (i + 1)] = i;
            cells["B" + (i + 1)] = i * i;
            cells["C" + (i + 1)] = i * i > 30 ? "TRUE" : "FALSE";
        }
        const getCell = id => {
            const value = cells[id] ?? "";
            let name = typeof value === "number" ? "number" : value === "TRUE" || value === "FALSE" ? "logic" : "";
            if(id === "E3" || id === "F3") name += " spill";
            if(id === "E4") name += " selected";
            return `<td class="${name}">${value}${id === "E4" ? `<i class="frame"></i>` : ""}</td>`;
        };
        let rows = "";
        for(let row = 1; row <= 18; row++){
            rows += `<tr><th scope="row" class="${row === 4 ? "current" : ""}">${row}</th>${columns.map(c => getCell(c + row)).join("")}<td></td></tr>`;
        }
        return `
        <div class="sheet"><table>
            <colgroup><col class="col-head">${columns.map(() => "<col>").join("")}<col class="col-last"></colgroup>
            <thead><tr>
                <td class="corner"><svg width="43" height="45" viewBox="0 0 43 45" aria-hidden="true"><path d="M43 0v45H0z" fill="#dddcdf"/></svg></td>
                ${columns.map(c => `<th scope="col" class="${c === "E" ? "current" : ""}">${c}</th>`).join("")}
                <td class="end"></td>
            </tr></thead>
            <tbody>${rows}<tr class="cut"><th></th>${columns.map(() => "<td></td>").join("")}<td></td></tr></tbody>
        </table></div>
        <div class="scroll">
            <button type="button" aria-label="Scroll up"><xl-icon name="up"></xl-icon></button>
            <div class="thumb"></div>
            <div class="track"></div>
            <button type="button" aria-label="Scroll down"><xl-icon name="down"></xl-icon></button>
        </div>`;
    }
    getStyles(){
        return `
        :host{ display: flex; min-height: 0; overflow: hidden; }
        .sheet{ flex: 1; min-width: 0; }
        table{ width: 100%; height: 100%; table-layout: fixed; border-collapse: separate; border-spacing: 0; font-family: var(--font-cell); font-size: var(--size-cell); line-height: 48px; }
        .col-head{ width: 84px; }
        .col-last{ width: 25px; }
        th, td{ padding: 1px 0 0; border: 0 solid #d3d2d5; border-width: 0 1px 1px 0; font-weight: 400; white-space: nowrap; }
        td{ color: #000; padding-left: 6px; padding-right: 7px; }
        thead tr{ height: 58px; }
        thead th, thead td{ height: 58px; border-bottom-color: #9f9da0; border-right-color: transparent; background: linear-gradient(#fff, #d3d2d5) right / 1px 100% no-repeat border-box; }
        tbody th{ border-right-color: #9f9da0; }
        tbody td:last-child{ border-right-color: #9f9da0; }
        thead .end{ background: none; }
        .corner{ padding: 0 5px 5px 0; vertical-align: bottom; border-bottom-color: #d3d2d5; }
        .corner svg{ display: block; margin-left: auto; }
        .current{ color: var(--green); background: #e1e0e3; }
        thead .current{ background: #e1e0e3; border-bottom: 3px solid var(--green); border-right-color: #c5c4c8; padding-top: 3px; }
        tbody .current{ border-right: 2px solid var(--green); }
        .number{ text-align: right; }
        .logic{ text-align: center; padding: 1px 0 0; }
        .spill{ border-right-color: transparent; }
        .selected{ position: relative; }
        .frame{ position: absolute; inset: -3px; border: 3px solid var(--green); }
        .frame::after{ content: ""; position: absolute; right: -5px; bottom: -5px; width: 9px; height: 9px; background: var(--green); border: 1px solid #fff; }
        .cut, .cut th, .cut td{ height: 12px; padding: 0; border-bottom: 0; line-height: 0; }
        .scroll{ display: flex; flex-direction: column; width: 25px; margin: 4px 5px 0; color: #666; }
        .scroll button{ height: 24px; border: 1px solid #b1afb3; background: #fff; }
        .thumb{ flex: 949; border: 1px solid #b1afb3; background: #fff; }
        .track{ flex: 109; background: #f0eff2; }
        `;
    }
}

class SheetTabs extends ExcelElement{
    getTemplate(){
        return `
        <div class="arrows">
            <button type="button" aria-label="Previous sheet"><xl-icon name="left"></xl-icon></button>
            <button type="button" aria-label="Next sheet"><xl-icon name="right"></xl-icon></button>
        </div>
        <button type="button" class="tab">UncleBob</button>
        <div class="rest"><button type="button" class="add" aria-label="New sheet"><xl-icon name="add"></xl-icon></button></div>
        <div class="scroll">
            <xl-icon name="dots"></xl-icon>
            <button type="button" aria-label="Scroll left"><xl-icon name="left"></xl-icon></button>
            <div class="thumb"></div>
            <div class="track"></div>
            <button type="button" aria-label="Scroll right"><xl-icon name="right"></xl-icon></button>
        </div>`;
    }
    getStyles(){
        return `
        :host{ display: flex; height: 46px; background: #f4f3f6; }
        .arrows, .rest, .scroll{ display: flex; align-items: center; border-top: 1px solid #b1afb3; }
        .arrows{ width: 165px; padding-left: 24px; color: #c6c5c8; }
        .arrows button{ width: 47px; height: 40px; }
        .tab{ width: 135px; height: 41px; background: #fff; color: var(--green); font-size: 20px; font-weight: 700; border: 1px solid #b1afb3; border-width: 0 1px; box-shadow: inset 0 -3px var(--green); }
        .rest{ flex: 1; padding-left: 53px; }
        .scroll{ width: 784px; margin-right: 35px; color: #666; }
        .scroll > xl-icon{ margin-right: 25px; }
        .scroll button{ width: 24px; height: 25px; border: 1px solid #b1afb3; background: #fff; }
        .thumb{ flex: 627; height: 25px; border: 1px solid #b1afb3; background: #fff; }
        .track{ flex: 80; height: 25px; background: #e9e8eb; }
        `;
    }
}

class StatusBar extends ExcelElement{
    getTemplate(){
        return `
        <span class="ready">READY</span>
        <button type="button" aria-label="Record macro"><xl-icon name="macro"></xl-icon></button>
        <div class="views">
            <button type="button" class="view view--active" aria-label="Normal"><xl-icon name="viewNormal"></xl-icon></button>
            <button type="button" class="view" aria-label="Page layout"><xl-icon name="viewPage"></xl-icon></button>
            <button type="button" class="view" aria-label="Page break preview"><xl-icon name="viewBreak"></xl-icon></button>
        </div>
        <button type="button" class="step" aria-label="Zoom out"><i></i></button>
        <input type="range" min="0" max="200" value="100" aria-label="Zoom">
        <button type="button" class="step step--in" aria-label="Zoom in"><i></i></button>
        <button type="button" class="zoom">100%</button>`;
    }
    getStyles(){
        return `
        :host{ display: flex; align-items: center; height: 36px; padding: 0 4px 0 11px; background: var(--green); color: #fff; font-size: 18px; }
        .ready{ width: 87px; }
        .views{ display: flex; margin-left: auto; margin-right: 3px; }
        .view{ width: 63px; height: 36px; }
        .view--active{ background: #0f6635; }
        .step{ width: 24px; height: 24px; }
        .step i{ width: 12px; height: 4px; background: #fff; }
        .step--in i{ width: 14px; height: 14px; background: linear-gradient(#fff, #fff) center / 14px 4px no-repeat, linear-gradient(#fff, #fff) center / 4px 14px no-repeat; }
        input{ width: 166px; height: 20px; background: linear-gradient(#fff, #fff) center / 100% 2px no-repeat; }
        input::-webkit-slider-thumb{ appearance: none; width: 6px; height: 20px; background: #fff; }
        .zoom{ width: 93px; padding-right: 10px; }
        `;
    }
}

class ExcelWindow extends ExcelElement{
    getTemplate(){
        return `
        <excel-header></excel-header>
        <excel-ribbon></excel-ribbon>
        <formula-bar></formula-bar>
        <sheet-grid></sheet-grid>
        <sheet-tabs></sheet-tabs>
        <status-bar></status-bar>`;
    }
    getStyles(){
        return `
        :host{ display: flex; flex-direction: column; height: 100vh; box-sizing: border-box; border: 2px solid #858385; background: #fff; color: var(--text); font-family: var(--font-ui); font-size: var(--size-ui); overflow: hidden; }
        sheet-grid{ flex: 1; }
        `;
    }
}

customElements.define("xl-icon", XlIcon);
customElements.define("xl-tool", XlTool);
customElements.define("xl-text-tool", XlTextTool);
customElements.define("xl-big-tool", XlBigTool);
customElements.define("xl-combo", XlCombo);
customElements.define("xl-group", XlGroup);
customElements.define("excel-header", ExcelHeader);
customElements.define("excel-ribbon", ExcelRibbon);
customElements.define("formula-bar", FormulaBar);
customElements.define("sheet-grid", SheetGrid);
customElements.define("sheet-tabs", SheetTabs);
customElements.define("status-bar", StatusBar);
customElements.define("excel-window", ExcelWindow);
</script>
</body>
</html>
